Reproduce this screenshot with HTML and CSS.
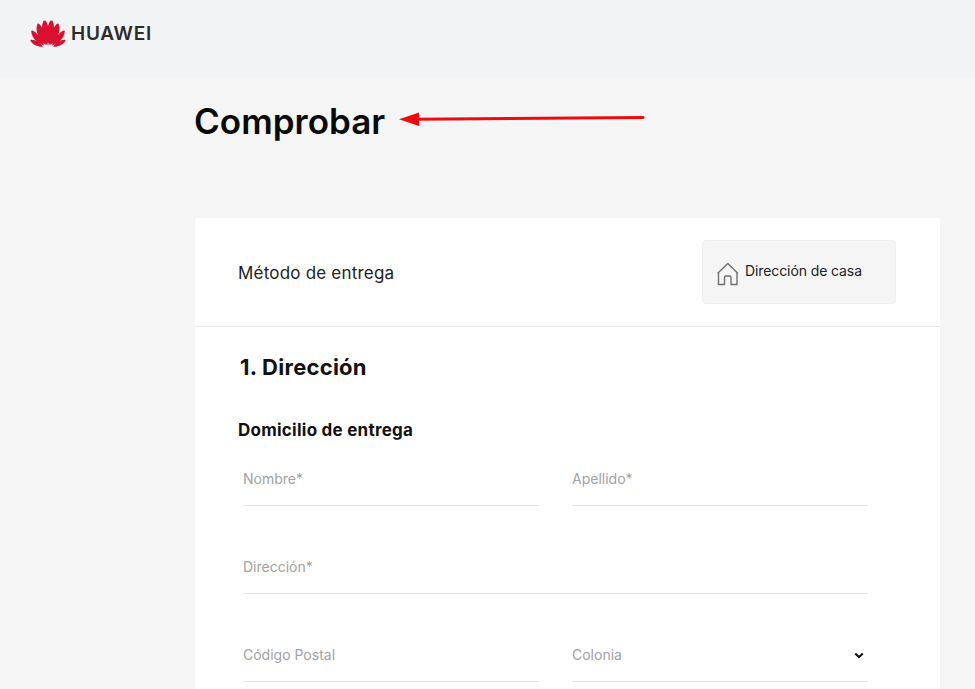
FILE: index.html
```html
<!DOCTYPE html>
<html lang="es">
<head>
<meta charset="utf-8">
<title>Comprobar</title>
<link rel="stylesheet" href="styles.css">
</head>
<body>
<header class="topbar">
  <div class="brand">
    <svg class="brand-mark" width="36" height="27" viewBox="0 0 36 27" aria-hidden="true">
      <g fill="#d9102f">
        <path d="M17.3 25.5 C11.8 19 10.6 8 13.2 1.4 C13.8 0.2 15 0.2 15.6 0.8 C18.6 4 19.8 14 17.3 25.5Z"/>
        <path d="M18.7 25.5 C24.2 19 25.4 8 22.8 1.4 C22.2 0.2 21 0.2 20.4 0.8 C17.4 4 16.2 14 18.7 25.5Z"/>
        <path d="M15.7 25 C8.8 20.5 5 11 7.2 4.4 C7.6 3.4 8.4 3.4 9 3.8 C12.5 7 16.6 15.5 15.7 25Z"/>
        <path d="M20.3 25 C27.2 20.5 31 11 28.8 4.4 C28.4 3.4 27.6 3.4 27 3.8 C23.5 7 19.4 15.5 20.3 25Z"/>
        <path d="M13.9 25.3 C7.5 23.5 1.6 17.8 1.2 11.2 C1.3 10.4 2 10.3 2.6 10.6 C7 13 12 18.4 13.9 25.3Z"/>
        <path d="M22.1 25.3 C28.5 23.5 34.4 17.8 34.8 11.2 C34.7 10.4 34 10.3 33.4 10.6 C29 13 24 18.4 22.1 25.3Z"/>
        <path d="M12.8 26.8 C8 27.2 2.6 24.8 0.4 20.8 C0.4 19.9 1 19.7 1.8 19.8 C6 19.8 10.6 22.6 12.8 26.8Z"/>
        <path d="M23.2 26.8 C28 27.2 33.4 24.8 35.6 20.8 C35.6 19.9 35 19.7 34.2 19.8 C30 19.8 25.4 22.6 23.2 26.8Z"/>
      </g>
    </svg>
    <span class="brand-name">HUAWEI</span>
  </div>
</header>
<main class="page">
  <div class="title-row">
    <h1 class="page-title">Comprobar</h1>
    <svg class="annotation-arrow" width="250" height="16" viewBox="0 0 250 16" aria-hidden="true">
      <path d="M16 8.2 L244 6.6" stroke="#ee0b10" stroke-width="3" stroke-linecap="round" fill="none"/>
      <path d="M0 8.3 L20 1.5 L20 15Z" fill="#ee0b10"/>
    </svg>
  </div>
  <section class="card">
    <div class="delivery">
      <span class="delivery-label">Método de entrega</span>
      <div class="delivery-option">
        <svg class="home-icon" width="24" height="24" viewBox="0 0 24 24" aria-hidden="true">
          <path d="M1.5 11.5 L11.8 1.5 L22 11.5 M2.5 10.5 V22.5 H8.5 V15.5 Q8.5 14 10 14 H13.5 Q15 14 15 15.5 V22.5 H21 V10.5" fill="none" stroke="#6f6f6f" stroke-width="1.4" stroke-linejoin="round"/>
        </svg>
        <span class="delivery-text">Dirección de casa</span>
      </div>
    </div>
    <div class="address">
      <h2 class="step-title">1. Dirección</h2>
      <h3 class="form-title">Domicilio de entrega</h3>
      <div class="fields">
        <div class="field">Nombre*</div>
        <div class="field">Apellido*</div>
        <div class="field field-wide">Dirección*</div>
        <div class="field">Código Postal</div>
        <div class="field field-select">Colonia
          <svg class="chevron" width="10" height="7" viewBox="0 0 10 7" aria-hidden="true">
            <path d="M1.2 1.4 L5 5 L8.8 1.4" fill="none" stroke="#111" stroke-width="2"/>
          </svg>
        </div>
      </div>
    </div>
  </section>
</main>
</body>
</html>
```

FILE: styles.css
```css
* { box-sizing: border-box; }
html, body { margin: 0; height: 689px; overflow: hidden; }
body {
  background: #f5f5f5;
  font-family: Inter, "Noto Sans", sans-serif;
  color: #111;
}
.topbar {
  height: 78px;
  background: #f2f3f5;
  padding: 20px 0 0 30px;
}
.brand { display: flex; align-items: center; gap: 5px; }
.brand-name {
  font-size: 19px;
  font-weight: 600;
  letter-spacing: 0.75px;
  color: #2b2b2b;
}
.page { padding-left: 194px; width: 940px; }
.title-row {
  position: relative;
  height: 140px;
  padding-top: 21px;
}
.page-title {
  margin: 0;
  font-size: 35px;
  line-height: 44px;
  font-weight: 600;
  letter-spacing: 0.02px;
  color: #0a0a0a;
}
.annotation-arrow { position: absolute; left: 205px; top: 33px; }
.card { background: #fff; margin-left: 1px; height: 480px; }
.delivery {
  height: 109px;
  border-bottom: 1px solid #e8e8e8;
  padding: 22px 44px 0 43px;
  display: flex;
  justify-content: space-between;
}
.delivery-label { font-size: 17px; line-height: 22px; margin-top: 22px; color: #222; font-weight: 400; letter-spacing: 0.2px; }
.delivery-option {
  width: 194px;
  height: 64px;
  background: #f5f5f5;
  border: 1px solid #eeeeee;
  border-radius: 4px;
  padding: 19px 0 0 13px;
  display: flex;
  gap: 5px;
}
.home-icon { margin-top: 2px; }
.delivery-text { font-size: 14px; line-height: 22px; color: #222; letter-spacing: -0.1px; }
.address { padding: 25px 72px 0 43px; }
.step-title { margin: 0 0 0 2px; font-size: 22px; line-height: 30px; font-weight: 700; letter-spacing: 0.25px; color: #111; }
.form-title { margin: 37px 0 0; font-size: 17px; line-height: 22px; font-weight: 700; letter-spacing: 0.25px; color: #111; }
.fields {
  display: grid;
  grid-template-columns: 296px 296px;
  column-gap: 33px;
  row-gap: 40px;
  margin: 0 0 0 5px;
  padding-top: 17px;
}
.field {
  height: 48px;
  border-bottom: 1px solid #e3e3e3;
  font-size: 14px;
  line-height: 24px;
  padding-top: 9px;
  color: #a2a2a2;
}
.field-wide { grid-column: 1 / span 2; }
.field-select { display: flex; justify-content: space-between; }
.chevron { margin: 9px 4px 0 0; }
```
